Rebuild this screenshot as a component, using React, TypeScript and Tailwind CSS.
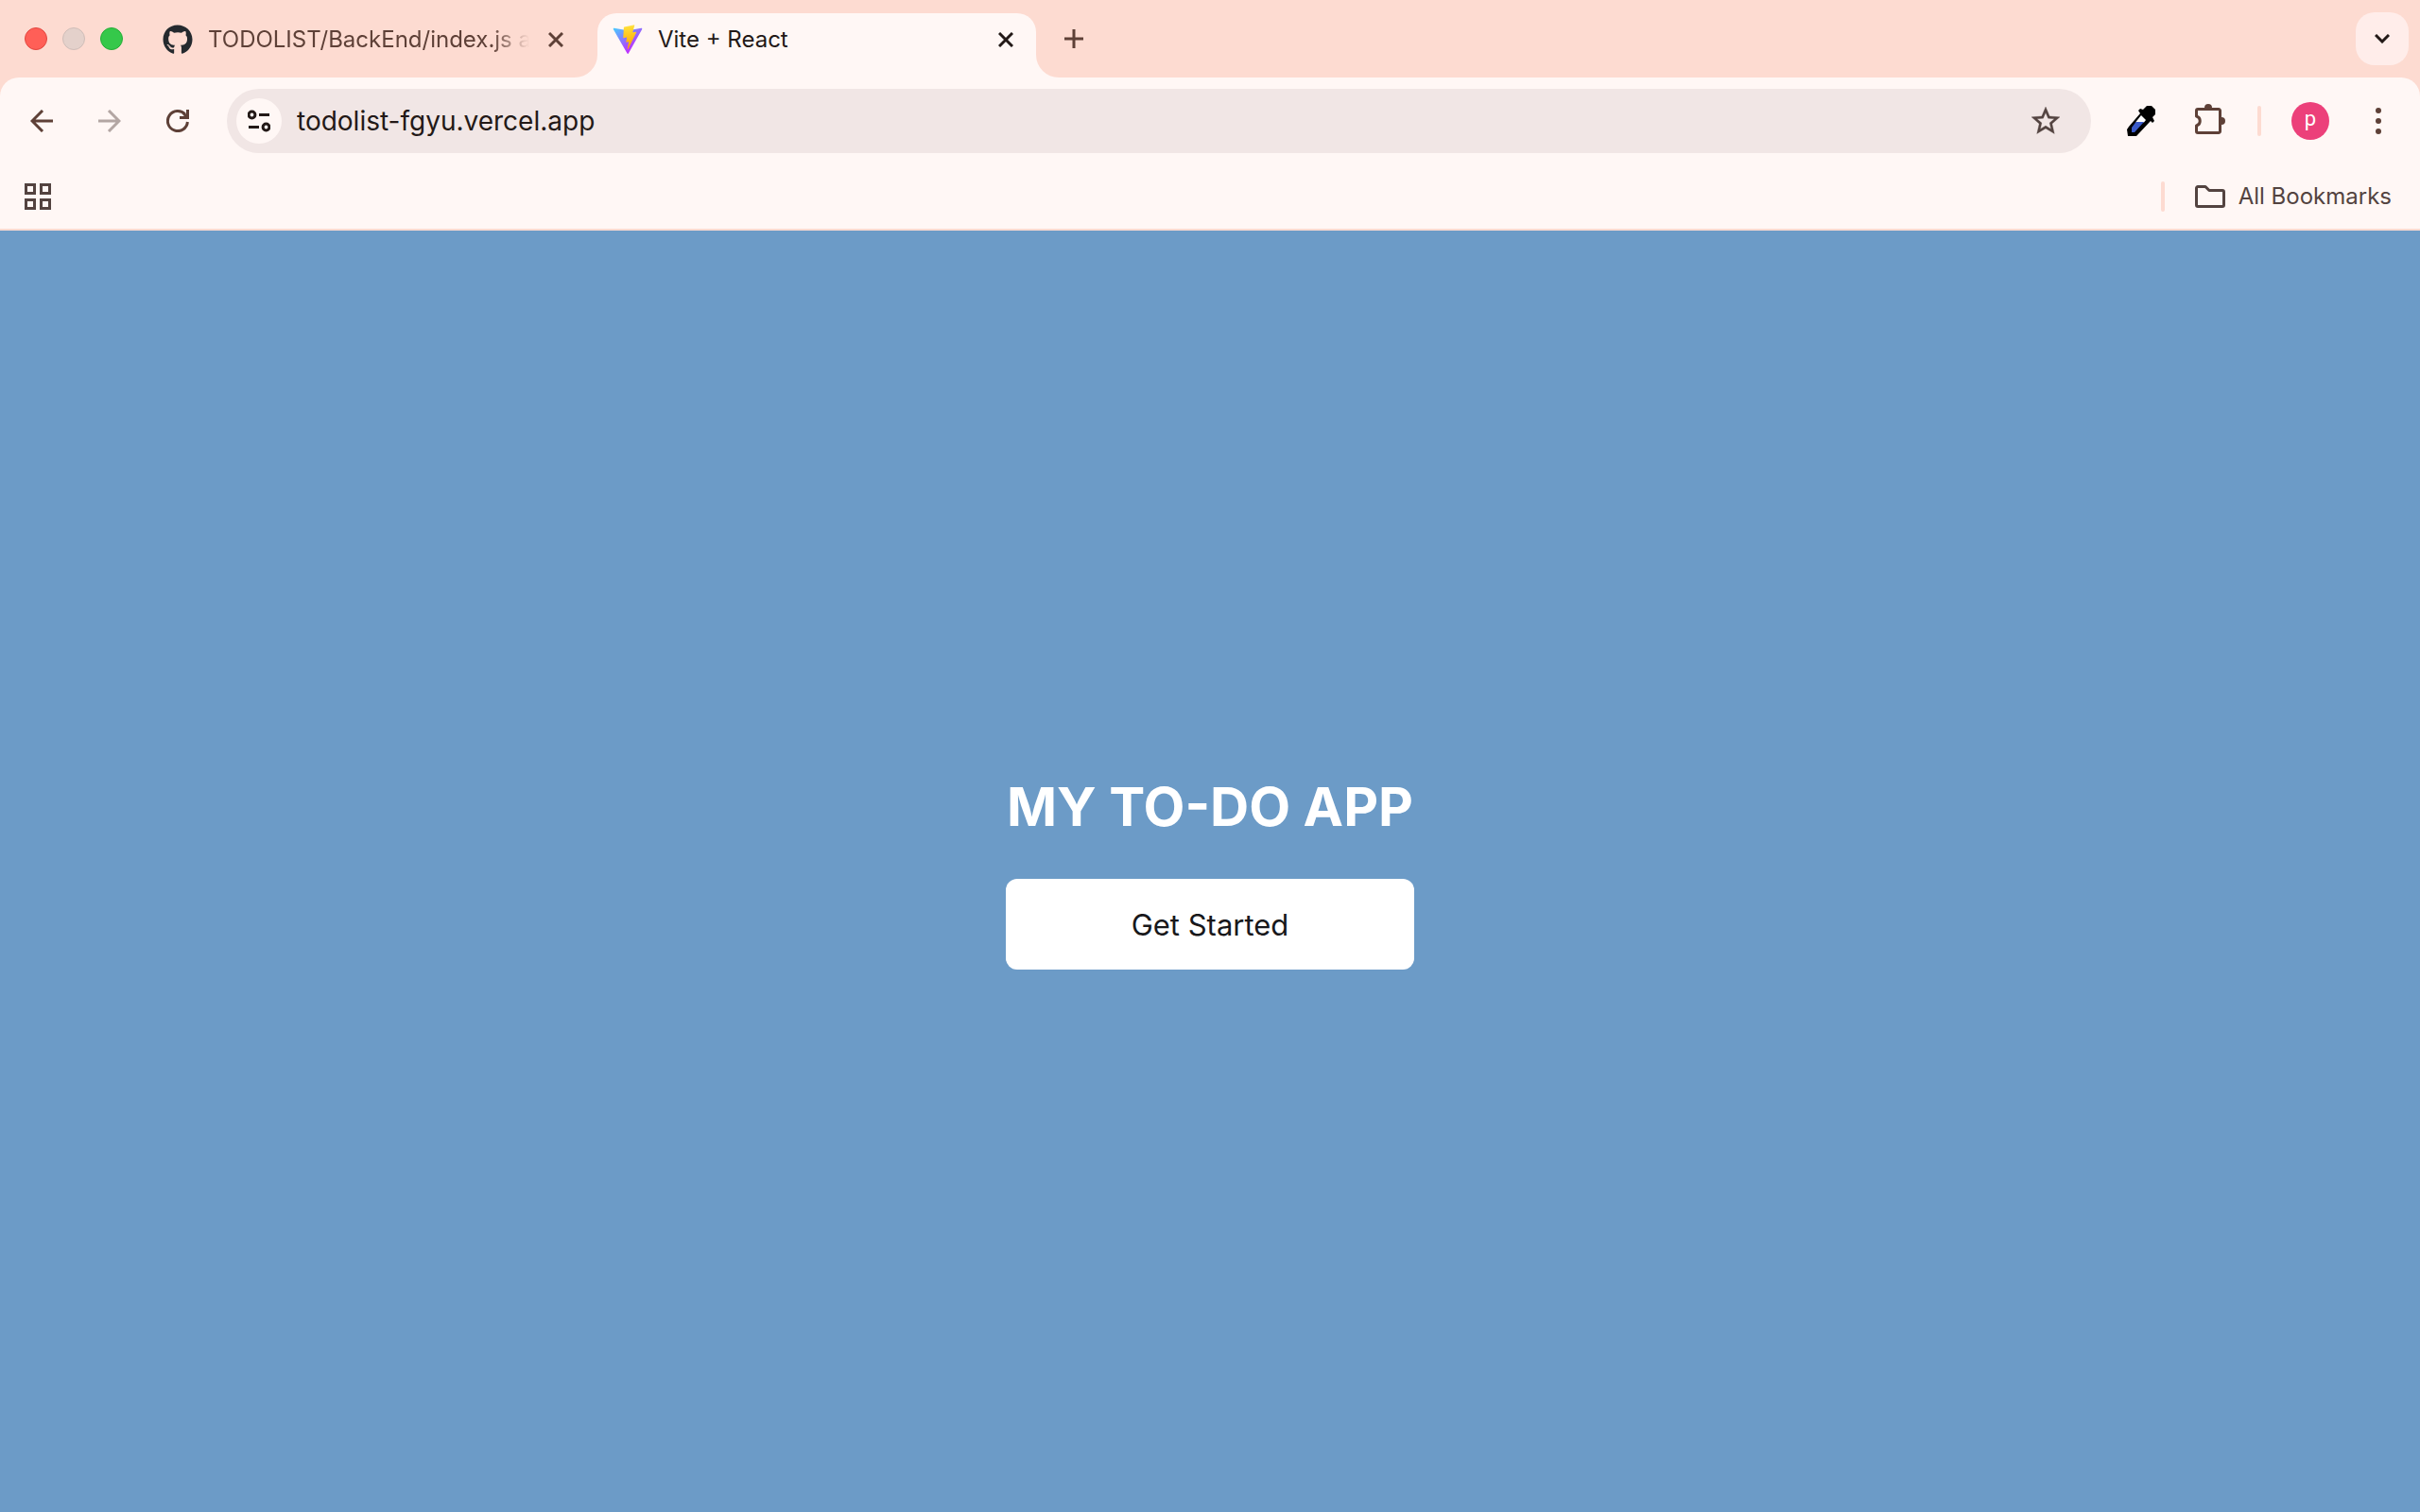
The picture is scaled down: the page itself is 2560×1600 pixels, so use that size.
import React from "react";
import { FaGithub } from "react-icons/fa";

const ViteLogo = () => (
  <svg viewBox="0 0 410 404" className="size-8 shrink-0" aria-hidden="true">
    <defs>
      <linearGradient id="vite-body" x1="6" y1="33" x2="235" y2="344" gradientUnits="userSpaceOnUse">
        <stop stopColor="#41D1FF" />
        <stop offset="1" stopColor="#BD34FE" />
      </linearGradient>
      <linearGradient id="vite-bolt" x1="194.651" y1="8.818" x2="236.076" y2="292.989" gradientUnits="userSpaceOnUse">
        <stop stopColor="#FFEA83" />
        <stop offset="0.083" stopColor="#FFDD35" />
        <stop offset="1" stopColor="#FFA800" />
      </linearGradient>
    </defs>
    <path
      fill="url(#vite-body)"
      d="M399.641 59.5246L215.643 388.545C211.844 395.338 202.084 395.378 198.228 388.618L10.5817 59.5563C6.38087 52.1896 12.6802 43.2665 21.0281 44.7586L205.223 77.6824C206.398 77.8924 207.601 77.8904 208.776 77.6763L389.119 44.8058C397.439 43.2894 403.768 52.1434 399.641 59.5246Z"
    />
    <path
      fill="url(#vite-bolt)"
      d="M292.965 1.5744L156.801 28.2552C154.563 28.6937 152.906 30.5903 152.771 32.8664L144.395 174.33C144.198 177.662 147.258 180.248 150.51 179.498L188.42 170.749C191.967 169.931 195.172 173.055 194.443 176.622L183.18 231.775C182.422 235.487 185.907 238.661 189.532 237.56L212.947 230.446C216.577 229.344 220.065 232.527 219.297 236.242L201.398 322.875C200.278 328.294 207.486 331.249 210.492 326.603L212.5 323.5L323.454 102.072C325.312 98.3645 322.108 94.137 318.036 94.9228L279.014 102.454C275.347 103.161 272.227 99.746 273.262 96.1583L298.731 7.86689C299.767 4.27314 296.636 0.855181 292.965 1.5744Z"
    />
  </svg>
);

const CloseIcon = () => (
  <svg viewBox="0 0 16 16" className="size-4" fill="none" stroke="currentColor" strokeWidth="3" aria-hidden="true">
    <path d="M1 1l14 14M15 1L1 15" />
  </svg>
);

const ArrowIcon = ({ flip = false }: { flip?: boolean }) => (
  <svg
    viewBox="0 0 24 24"
    className={flip ? "size-6 -scale-x-100" : "size-6"}
    fill="none"
    stroke="currentColor"
    strokeWidth="3"
    aria-hidden="true"
  >
    <path d="M24 12H2M13 1L2 12l11 11" />
  </svg>
);

const ReloadIcon = () => (
  <svg viewBox="0 0 24 24" className="size-6" fill="none" stroke="currentColor" strokeWidth="3" aria-hidden="true">
    <path d="M22.4 13A10.5 10.5 0 1 1 19.8 5.1" />
    <path d="M14 8.4h8.5V0" />
    <path d="M18.5 4.5l3 3" />
  </svg>
);

const TuneIcon = () => (
  <svg viewBox="0 0 24 24" className="size-6" fill="none" stroke="currentColor" strokeWidth="3" aria-hidden="true">
    <circle cx="4.5" cy="5.5" r="3.4" />
    <path d="M12 5.5h11M1 18.5h11" />
    <circle cx="19.5" cy="18.5" r="3.4" />
  </svg>
);

const StarIcon = () => (
  <svg viewBox="2 2 20 20" className="size-[30px]" fill="currentColor" stroke="currentColor" strokeWidth="0.2" aria-hidden="true">
    <path d="M22 9.24l-7.19-.62L12 2 9.19 8.63 2 9.24l5.46 4.73L5.82 21 12 17.27 18.18 21l-1.63-7.03L22 9.24zM12 15.4l-3.76 2.27 1-4.28-3.32-2.88 4.38-.38L12 6.1l1.71 4.04 4.38.38-3.32 2.88 1 4.28L12 15.4z" />
  </svg>
);

const EyedropperIcon = () => (
  <svg viewBox="0 0 32 32" className="size-8" aria-hidden="true">
    <path fill="#000" d="M0 25L1 32H10L25 16l2 2 2-2-2-4 3-3V4l-4-4h-5l-4 4-3-1-2 2 2 3L2 22z" />
    <path fill="#fff" d="M15 10l5 5-2 2.500h-9z" />
    <path fill="#3b5bc9" d="M9.500 17h8.500L8 28H5v-5z" />
  </svg>
);

const PuzzleIcon = () => (
  <svg viewBox="0 0 32 36" className="h-9 w-8" aria-hidden="true">
    <path
      fill="none"
      stroke="currentColor"
      strokeWidth="3"
      strokeLinejoin="round"
      d="M3 5.500H25A1.500 1.500 0 0 1 26.500 7V29A1.500 1.500 0 0 1 25 30.500H3A1.500 1.500 0 0 1 1.500 29V23A5.200 5.200 0 0 0 1.500 13V7A1.500 1.500 0 0 1 3 5.500Z"
    />
    <path fill="currentColor" d="M10 4a4 4 0 0 1 8 0v1h-8zM27 14h1a4 4 0 0 1 0 8h-1z" />
  </svg>
);

const FolderIcon = () => (
  <svg viewBox="0 0 32 24" className="h-6 w-8" fill="none" stroke="currentColor" strokeWidth="3" strokeLinejoin="round" aria-hidden="true">
    <path d="M3 1.500H11L15 5.500H29A1.500 1.500 0 0 1 30.500 7V21A1.500 1.500 0 0 1 29 22.500H3A1.500 1.500 0 0 1 1.500 21V3A1.500 1.500 0 0 1 3 1.500Z" />
  </svg>
);

const GridIcon = () => (
  <svg viewBox="0 0 28 28" className="size-7" fill="none" stroke="currentColor" strokeWidth="3" aria-hidden="true">
    <path d="M1.500 1.500h9v9h-9zM17.500 1.500h9v9h-9zM1.500 17.500h9v9h-9zM17.500 17.500h9v9h-9z" />
  </svg>
);

const DotsIcon = () => (
  <svg viewBox="0 0 28 28" className="size-7" fill="currentColor" aria-hidden="true">
    <circle cx="14" cy="3" r="3" />
    <circle cx="14" cy="14" r="3" />
    <circle cx="14" cy="25" r="3" />
  </svg>
);

function TabStrip() {
  return (
    <div className="flex h-[82px] items-end bg-[#fddbd1]">
      <div className="flex h-full items-center gap-4 pl-[26px]">
        <button aria-label="Close window" className="size-6 rounded-full border border-[#e2463f] bg-[#ff5f57]" />
        <button aria-label="Minimize window" className="size-6 rounded-full border border-[#cfbdb8] bg-[#e4d1cb]" />
        <button aria-label="Zoom window" className="size-6 rounded-full border border-[#24ad36] bg-[#35c84a]" />
      </div>
      <div className="ml-[42px] flex h-[68px] w-[436px] items-center pb-3 text-[#5e4037]">
        <FaGithub className="size-8 shrink-0 text-[#24292e]" aria-hidden="true" />
        <span className="ml-4 w-[340px] whitespace-nowrap text-[24px] leading-8 [mask-image:linear-gradient(to_right,black_88%,transparent)]">
          TODOLIST/BackEnd/index.js a
        </span>
        <button aria-label="Close tab" className="ml-5 flex size-4 items-center justify-center">
          <CloseIcon />
        </button>
      </div>
      <svg viewBox="0 0 24 24" className="size-6 shrink-0" aria-hidden="true">
        <path fill="#fff7f5" d="M24 0v24H0A24 24 0 0 0 24 0z" />
      </svg>
      <div className="flex h-[68px] w-[464px] shrink-0 items-center rounded-t-[20px] bg-[#fff7f5] px-4 pb-3 text-[#231917]">
        <ViteLogo />
        <span className="ml-4 grow text-[24px] leading-8">Vite + React</span>
        <button aria-label="Close tab" className="mr-2 flex size-4 items-center justify-center">
          <CloseIcon />
        </button>
      </div>
      <svg viewBox="0 0 24 24" className="size-6 shrink-0" aria-hidden="true">
        <path fill="#fff7f5" d="M0 0v24H24A24 24 0 0 1 0 0z" />
      </svg>
      <div className="flex h-full grow items-center justify-between pr-3 pl-[6px]">
        <button aria-label="New tab" className="text-[#5e4037]">
          <svg viewBox="0 0 20 20" className="size-5" stroke="currentColor" strokeWidth="3" aria-hidden="true">
            <path d="M10 0v20M0 10h20" />
          </svg>
        </button>
        <button aria-label="Search tabs" className="flex size-14 items-center justify-center rounded-[20px] bg-[#ffedea] text-[#231917]">
          <svg viewBox="0 0 16 10" className="h-[10px] w-4" fill="none" stroke="currentColor" strokeWidth="3" aria-hidden="true">
            <path d="M1 1l7 7 7-7" />
          </svg>
        </button>
      </div>
    </div>
  );
}

function Toolbar() {
  return (
    <div className="flex h-[92px] items-center pr-[30px] pl-8 text-[#5e4037]">
      <div className="flex items-center gap-12">
        <button aria-label="Back"><ArrowIcon /></button>
        <button aria-label="Forward" className="text-[#b3a6a3]"><ArrowIcon flip /></button>
        <button aria-label="Reload"><ReloadIcon /></button>
      </div>
      <div className="ml-10 flex h-[68px] grow items-center rounded-full bg-[#f1e6e5] pr-[33px] pl-[10px] text-[#231917]">
        <button aria-label="View site information" className="flex size-12 shrink-0 items-center justify-center rounded-full bg-[#fff7f5]">
          <TuneIcon />
        </button>
        <input
          aria-label="Address"
          defaultValue="todolist-fgyu.vercel.app"
          className="ml-4 h-10 grow bg-transparent text-[28px] leading-10 outline-none"
        />
        <button aria-label="Bookmark this tab" className="text-[#534340]"><StarIcon /></button>
      </div>
      <button aria-label="Color picker" className="ml-[38px]"><EyedropperIcon /></button>
      <button aria-label="Extensions" className="ml-10"><PuzzleIcon /></button>
      <div className="ml-[34px] h-8 w-1 shrink-0 rounded-full bg-[#fddbd1]" />
      <button aria-label="Profile" className="ml-8 flex size-10 items-center justify-center rounded-full bg-[#ec407a] pb-1 font-['Roboto',sans-serif] text-[22px] leading-6 text-white">
        p
      </button>
      <button aria-label="Menu" className="ml-[38px]"><DotsIcon /></button>
    </div>
  );
}

function BookmarksBar() {
  return (
    <div className="flex h-[70px] items-center justify-between border-b-2 border-[#fddbd1] pr-[30px] pl-[26px] text-[#534340]">
      <button aria-label="Apps"><GridIcon /></button>
      <div className="flex items-center">
        <div className="h-8 w-1 shrink-0 rounded-full bg-[#fddbd1]" />
        <button className="ml-8 flex items-center gap-[14px] text-[24px] leading-8">
          <FolderIcon />
          All Bookmarks
        </button>
      </div>
    </div>
  );
}

export default function App() {
  return (
    <div className="flex min-h-screen flex-col bg-[#6c9bc7] font-['Inter',sans-serif]">
      <header className="bg-[#fddbd1]">
        <TabStrip />
        <div className="rounded-t-[20px] bg-[#fff7f5]">
          <Toolbar />
          <BookmarksBar />
        </div>
      </header>
      <main className="flex grow items-center justify-center">
        <div className="flex w-[432px] flex-col gap-10">
          <h1 className="text-center text-[57px] leading-[72px] font-bold whitespace-nowrap text-white">MY TO-DO APP</h1>
          <button className="h-24 rounded-xl bg-white pt-[2px] text-[31px] leading-10 text-[#18181b]">Get Started</button>
        </div>
      </main>
    </div>
  );
}
